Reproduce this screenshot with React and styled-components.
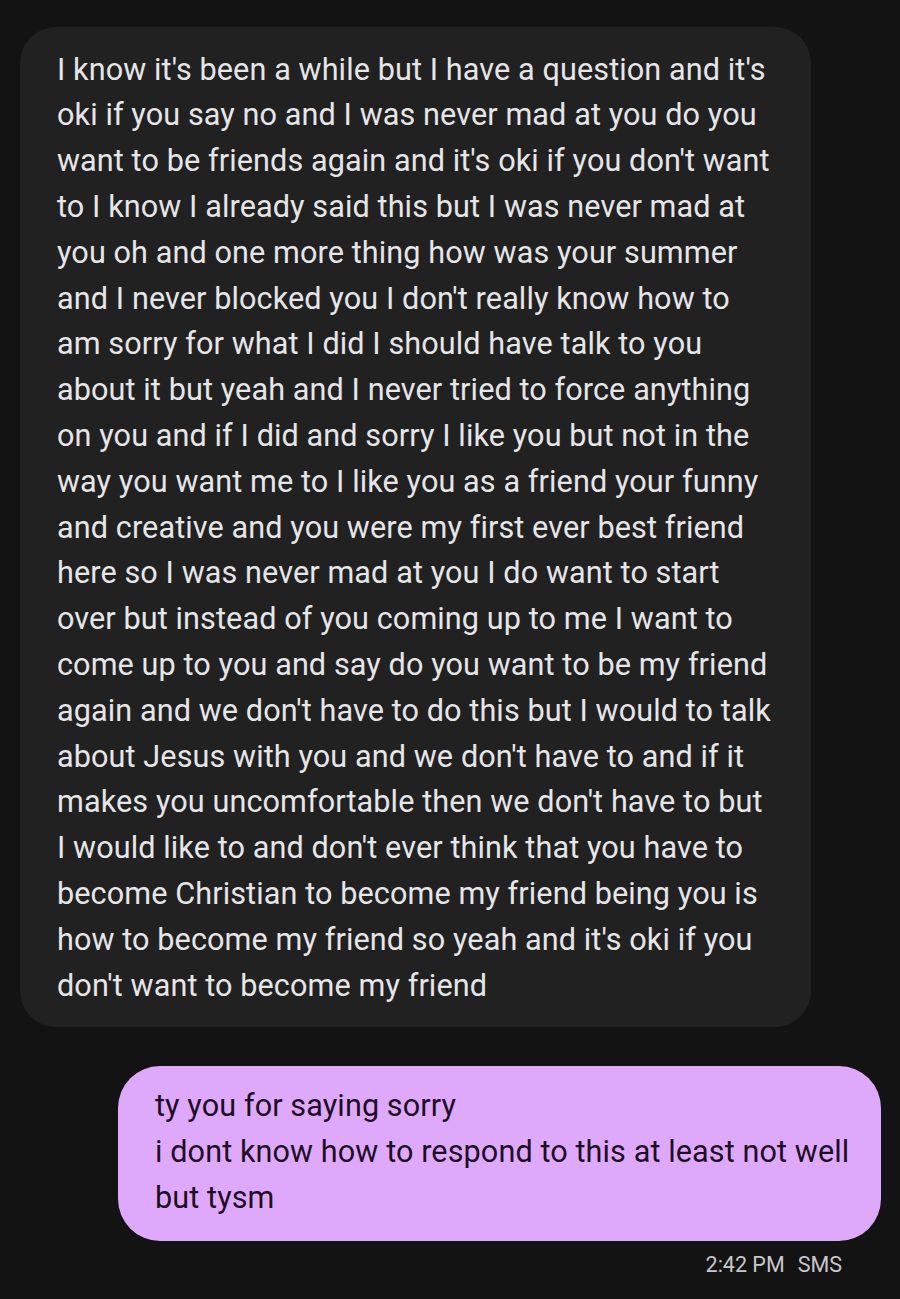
import React from "react";
import styled, { createGlobalStyle } from "styled-components";

const Global = createGlobalStyle`
  html, body { margin: 0; padding: 0; background: #131314; }
  body { font-family: Roboto, "Noto Sans", sans-serif; }
`;

const Screen = styled.div`
  width: 900px;
  height: 1299px;
  background: #131314;
  box-sizing: border-box;
  padding: 27px 20px 0 20px;
  display: flex;
  flex-direction: column;
`;

const Row = styled.div`
  display: flex;
  justify-content: ${(p) => (p.$out ? "flex-end" : "flex-start")};
  margin-top: ${(p) => p.$gap || 0}px;
`;

const Bubble = styled.div`
  box-sizing: border-box;
  width: ${(p) => p.$w}px;
  background: ${(p) => (p.$out ? "#dfa9fb" : "#212122")};
  color: ${(p) => (p.$out ? "#1d0e25" : "#e6e5e7")};
  border-radius: ${(p) => (p.$out ? 42 : 36)}px;
  padding: ${(p) => p.$pad};
  font-size: 30.6px;
  line-height: 45.8px;
  letter-spacing: 0.1px;
  white-space: pre;
  margin-right: ${(p) => (p.$out ? -1 : 0)}px;
`;

const Meta = styled.div`
  display: flex;
  justify-content: flex-end;
  gap: 13px;
  padding-right: 38px;
  margin-top: 11px;
  font-size: 21.5px;
  color: #c9c7cb;
  font-family: Roboto, sans-serif;
`;

const incoming = [
  "I know it's been a while but I have a question and it's",
  "oki if you say no and I was never mad at you do you",
  "want to be friends again and it's oki if you don't want",
  "to I know I already said this but I was never mad at",
  "you oh and one more thing how was your summer",
  "and I never blocked you I don't really know how to",
  "am sorry for what I did I should have talk to you",
  "about it but yeah and I never tried to force anything",
  "on you and if I did and sorry I like you but not in the",
  "way you want me to I like you as a friend your funny",
  "and creative and you were my first ever best friend",
  "here so I was never mad at you I do want to start",
  "over but instead of you coming up to me I want to",
  "come up to you and say do you want to be my friend",
  "again and we don't have to do this but I would to talk",
  "about Jesus with you and we don't have to and if it",
  "makes you uncomfortable then we don't have to but",
  "I would like to and don't ever think that you have to",
  "become Christian to become my friend being you is",
  "how to become my friend so yeah and it's oki if you",
  "don't want to become my friend",
];

const outgoing = [
  "ty you for saying sorry",
  "i dont know how to respond to this at least not well",
  "but tysm",
];

export default function App() {
  return (
    <>
      <Global />
      <Screen>
        <Row>
          <Bubble $w={791} $pad="19.6px 30px 18.4px 37px">
            {incoming.join("\n")}
          </Bubble>
        </Row>
        <Row $out $gap={39}>
          <Bubble $out $w={763} $pad="17.6px 30px 20px 37px">
            {outgoing.join("\n")}
          </Bubble>
        </Row>
        <Meta>
          <span>2:42 PM</span>
          <span>SMS</span>
        </Meta>
      </Screen>
    </>
  );
}
